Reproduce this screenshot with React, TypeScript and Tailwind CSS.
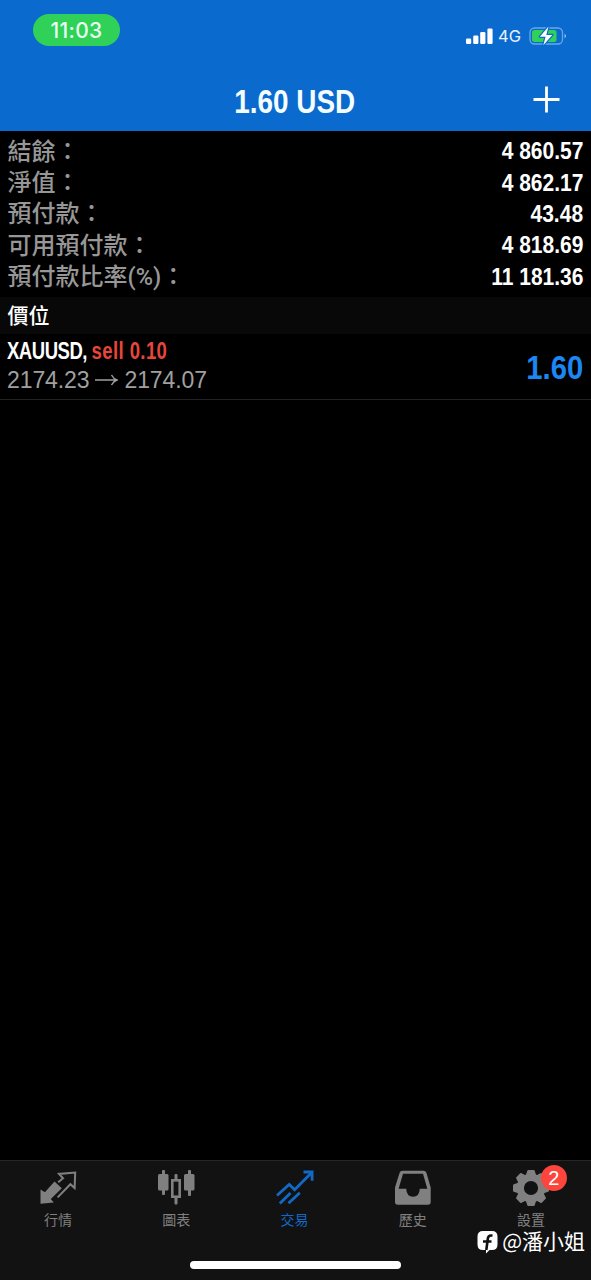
import type { ReactNode } from "react";

const balances = [
  { label: "結餘", value: "4 860.57" },
  { label: "淨值", value: "4 862.17" },
  { label: "預付款", value: "43.48" },
  { label: "可用預付款", value: "4 818.69" },
  { label: "預付款比率", unit: "(%)", value: "11 181.36" },
];

function StatusBar() {
  return (
    <div className="flex h-[70px] items-start justify-between pl-[33px] pr-[23px]">
      <div className="mt-[14px] flex h-8 w-[87px] items-center justify-center rounded-full bg-[#30d158] pt-px font-['Inter'] text-[21px] font-medium tracking-[0.3px] text-[#e9ffef]">
        11:03
      </div>
      <div className="mt-[25px] flex h-[21px] items-center">
        <svg width="28" height="18" viewBox="0 0 28 18" fill="#fff">
          <rect x="0" y="11.5" width="5.2" height="5.5" rx="1.2" />
          <rect x="7.2" y="8.5" width="5.2" height="8.5" rx="1.2" />
          <rect x="14.2" y="5" width="5.2" height="12" rx="1.2" />
          <rect x="21.4" y="1.5" width="5.2" height="15.5" rx="1.2" />
        </svg>
        <span className="ml-[4px] w-[27px] pt-0.5 font-['Inter'] text-[16.5px] text-[#e6f3ff]">4G</span>
        <svg className="ml-1" width="39" height="22" viewBox="0 0 39 22">
          <rect x="1" y="3" width="32.5" height="16" rx="4.5" fill="none" stroke="#6ba8e3" strokeWidth="1.3" />
          <rect x="3" y="5" width="24.5" height="12" rx="2.5" fill="#30d158" />
          <path d="M35.5 8.8v4.4q1.6-.7 1.6-2.2t-1.6-2.2z" fill="#8fc0ee" />
          <path d="M19.5 1.5 10.8 11.7h5.8l-2.3 8.5 9-10.2h-6z" fill="#fff" stroke="#0a6acd" strokeWidth="2.4" strokeLinejoin="round" paintOrder="stroke" />
        </svg>
      </div>
    </div>
  );
}

function Tab({ label, active, children }: { label: string; active?: boolean; children: ReactNode }) {
  return (
    <div className={`flex flex-1 flex-col items-center pt-[8px] ${active ? "text-[#1169c8]" : "text-[#808080]"}`}>
      <div className="relative h-9 w-[38px]">{children}</div>
      <span className="mt-[5px] text-[14px] leading-[20px]">{label}</span>
    </div>
  );
}

function QuotesIcon() {
  return (
    <svg width="38" height="38" viewBox="0 0 38 38">
      <path
        d="M19.2 13.2 24 9.2 20 4.9 36.2 3.6 35.6 19 31.4 15.2 18.6 28.4"
        fill="none"
        stroke="currentColor"
        strokeWidth="2"
      />
      <path d="M15.5 12.4 22.8 19.2 11.8 30 14.8 33.6 1.5 34.8V20.5l4.4 2.8z" fill="currentColor" />
    </svg>
  );
}

function ChartIcon() {
  return (
    <svg width="38" height="38" viewBox="0 0 38 38" fill="currentColor">
      <rect x="5" y="1" width="3" height="25" rx="1" />
      <rect x="1" y="5" width="10.5" height="16.5" rx="1.5" />
      <rect x="31" y="1" width="3" height="26" rx="1" />
      <rect x="27" y="5" width="10.5" height="16.5" rx="1.5" />
      <rect x="17.5" y="5" width="3" height="6" rx="1" />
      <rect x="17.5" y="28" width="3" height="7.5" rx="1" />
      <rect x="15.3" y="11.3" width="7.4" height="16.4" fill="none" stroke="currentColor" strokeWidth="2.6" />
    </svg>
  );
}

function TradeIcon() {
  return (
    <svg width="38" height="38" viewBox="0 0 38 38" fill="none" stroke="currentColor" strokeWidth="2.8">
      <path d="M1 26.5 13.2 15.5 18.6 20.8 35 4.2" />
      <path d="M27.5 3h8.6v8.8" />
      <path d="M3.8 34.5 14.5 24M12.5 34.3 23.8 23.8" />
    </svg>
  );
}

function HistoryIcon() {
  return (
    <svg width="38" height="38" viewBox="0 0 38 38">
      <path
        fillRule="evenodd"
        d="M8.5 1.8h21q2.2 0 3 2.2l4.2 14.5V33q0 2.8-2.8 2.8H3.8Q1 35.8 1 33V18.5L5.5 4q.7-2.2 3-2.2zM9 4.7 4.6 19.8h7.6q.4 8 6.8 8t6.8-8h7.5L29 4.7z"
        fill="currentColor"
      />
    </svg>
  );
}

function SettingsIcon() {
  return (
    <svg width="38" height="38" viewBox="0 0 38 38">
      <g fill="currentColor">
        {[0, 45, 90, 135, 180, 225, 270, 315].map((a) => (
          <path key={a} d="M13.6 7 15.2 1.9q.3-.9 1.1-.9h5.4q.8 0 1.1.9L24.4 7z" transform={`rotate(${a} 19 19)`} />
        ))}
      </g>
      <circle cx="19" cy="19" r="10.7" fill="none" stroke="currentColor" strokeWidth="7.2" />
    </svg>
  );
}

export default function App() {
  return (
    <div className="flex h-[1280px] w-[591px] flex-col overflow-hidden bg-black font-['Liberation_Sans','Noto_Sans_CJK_TC',sans-serif]">
      <header className="h-[131px] shrink-0 bg-[#0a6acd]">
        <StatusBar />
        <div className="grid h-[61px] grid-cols-[1fr_auto_1fr] items-center">
          <h1 className="col-start-2 -ml-[2px] scale-x-[0.82] pt-px text-[34px] font-bold whitespace-nowrap text-[#f4fdff]">
            1.60 USD
          </h1>
          <svg className="mr-[31px] mb-[3px] justify-self-end" width="27" height="27" viewBox="0 0 27 27" stroke="#fff" strokeWidth="2.8">
            <path d="M13.5 0.5v26M0.5 13.5h26" />
          </svg>
        </div>
      </header>

      <main className="flex-1">
        <div className="px-2 pt-[5px] pb-1">
          {balances.map((row) => (
            <div key={row.label} className="flex h-[31.4px] items-center justify-between">
              <span className="-ml-[0.5px] text-[24px] font-medium text-[#979797]">
                {row.label}
                {row.unit && <span className="font-['Roboto'] text-[23.5px] font-medium">{row.unit}</span>}：
              </span>
              <span className="origin-right scale-x-[0.875] pb-px text-[24px] font-bold text-white">{row.value}</span>
            </div>
          ))}
        </div>
        <div className="flex h-[37px] items-center bg-[#080808] px-[7.5px] pt-px text-[21px] font-medium text-white">價位</div>
        <div className="flex h-[66px] items-center justify-between border-b border-[#222] pr-2 pl-[7px]">
          <div>
            <div className="origin-left scale-x-[0.805] text-[23px] leading-[29px] font-bold whitespace-nowrap text-white">
              <span className="tracking-[-0.6px]">XAUUSD, </span>
              <span className="tracking-[0.5px] text-[#e8463c]">sell 0.10</span>
            </div>
            <div className="flex items-center text-[23px] leading-[29px] tracking-[-0.1px] text-[#a0a0a0]">
              2174.23
              <svg className="mx-[6px]" width="23" height="14" viewBox="0 0 23 14" fill="none" stroke="currentColor" strokeWidth="1.4">
                <path d="M0 6h22M16.5 1q2 3.8 5.5 5-3.5 1.2-5.5 5" />
              </svg>
              2174.07
            </div>
          </div>
          <span className="origin-right scale-x-[0.86] pt-0.5 text-[34px] font-bold text-[#1c86f2]">1.60</span>
        </div>
      </main>

      <footer className="relative h-[120px] shrink-0 border-t border-[#252525] bg-[#121212]">
        <nav className="-ml-px flex w-[591px]">
          <Tab label="行情"><QuotesIcon /></Tab>
          <Tab label="圖表"><ChartIcon /></Tab>
          <Tab label="交易" active><TradeIcon /></Tab>
          <Tab label="歷史"><HistoryIcon /></Tab>
          <Tab label="設置">
            <SettingsIcon />
            <span className="absolute -top-[4px] left-[29px] flex h-[26px] w-[26px] items-center justify-center rounded-full bg-[#fc453c] text-[20px] text-white">
              2
            </span>
          </Tab>
        </nav>
        <div className="absolute bottom-[11px] left-[190px] h-2 w-[211px] rounded-full bg-white" />
        <div className="absolute top-[67px] right-[6px] flex items-center gap-[3px] text-white">
          <svg className="mt-0.5" width="22" height="24" viewBox="0 0 22 24">
            <path d="M6 1h9q5.5 0 5.5 5.5v8q0 5.5-5.5 5.5h-2.5l-3.5 3.5v-3.5H6q-5.5 0-5.5-5.5v-8Q.5 1 6 1z" fill="#fff" />
            <path d="M15.5 5.5h-1.5q-2.7 0-3.1 2.8L9.3 20M6 11.5h8.5" fill="none" stroke="#121212" strokeWidth="2.6" />
          </svg>
          <span className="mb-[3px] font-['Noto_Sans_CJK_TC',sans-serif] text-[21px] leading-[22px] whitespace-nowrap">@潘小姐</span>
        </div>
      </footer>
    </div>
  );
}
